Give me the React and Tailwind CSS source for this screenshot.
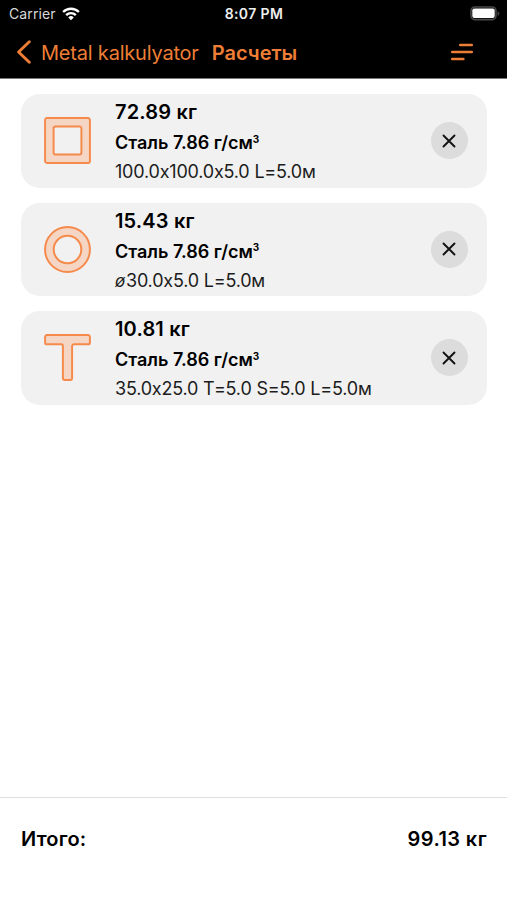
import React, { useState } from 'react';

const SquareTube = () => (
  <svg width="47" height="47" viewBox="0 0 48 48" fill="none" stroke="#f58a4b" strokeWidth="2">
    <path fill="#f5d5c3" fillRule="evenodd" strokeLinejoin="round" d="M3 1.1h42a1.9 1.9 0 0 1 1.9 1.9v42a1.9 1.9 0 0 1-1.9 1.9H3A1.9 1.9 0 0 1 1.1 45V3A1.9 1.9 0 0 1 3 1.1zM11.7 9.8a1.9 1.9 0 0 0-1.9 1.9v24.6a1.9 1.9 0 0 0 1.9 1.9h24.6a1.9 1.9 0 0 0 1.9-1.9V11.7a1.9 1.9 0 0 0-1.9-1.9z" />
  </svg>
);

const RoundTube = () => (
  <svg width="47" height="47" viewBox="0 0 48 48" fill="none" stroke="#f58a4b">
    <circle cx="24" cy="24" r="18.5" stroke="#f5d5c3" strokeWidth="8.6" />
    <circle cx="24" cy="24" r="22.9" strokeWidth="2" />
    <circle cx="24" cy="24" r="14.1" strokeWidth="2" />
  </svg>
);

const TeeBar = () => (
  <svg width="47" height="47" viewBox="0 0 48 48" fill="#f5d5c3" stroke="#f58a4b" strokeWidth="2" strokeLinejoin="round">
    <path d="M3 1.1h42a1.9 1.9 0 0 1 1.9 1.9v5.6a1.9 1.9 0 0 1-1.9 1.9H30.6a1.9 1.9 0 0 0-1.9 1.9V45a1.9 1.9 0 0 1-1.9 1.9h-5.6a1.9 1.9 0 0 1-1.9-1.9V12.4a1.9 1.9 0 0 0-1.9-1.9H3a1.9 1.9 0 0 1-1.9-1.9V3A1.9 1.9 0 0 1 3 1.1z" />
  </svg>
);

const initialItems = [
  { id: 1, icon: SquareTube, weight: 72.89, size: '100.0x100.0x5.0 L=5.0м' },
  { id: 2, icon: RoundTube, weight: 15.43, round: true, size: '30.0x5.0 L=5.0м' },
  { id: 3, icon: TeeBar, weight: 10.81, size: '35.0x25.0 T=5.0 S=5.0 L=5.0м' },
];

const StatusBar = () => (
  <div className="grid grid-cols-3 items-center h-[27px] pl-[9px] pr-[7px] text-white">
    <div className="flex items-center gap-[6px]">
      <span className="text-[14px] leading-4 tracking-[0.1px] text-[#d8d8d8]">Carrier</span>
      <svg width="18" height="14" viewBox="0 0 19 14" fill="none" stroke="#fff" strokeWidth="2.5">
        <path d="M1.2 4.9a11.7 11.7 0 0 1 16.6 0" />
        <path d="M4.4 8.2a7.2 7.2 0 0 1 10.2 0" />
        <path d="M9.5 13.6 6.6 10.6a4.1 4.1 0 0 1 5.8 0z" fill="#fff" stroke="none" />
      </svg>
    </div>
    <span className="-ml-px text-center text-[14px] leading-4 font-semibold tracking-[0.4px] text-[#eee]">8:07 PM</span>
    <svg className="justify-self-end" width="30" height="15" viewBox="0 0 30 15">
      <rect x="1" y="1" width="25" height="12.6" rx="3.8" fill="none" stroke="#4a4a4a" strokeWidth="1.6" />
      <rect x="2.3" y="2.5" width="22.4" height="9.6" rx="2" fill="#fff" />
      <path d="M27.6 5.2c2.3.8 2.3 3.8 0 4.6z" fill="#4a4a4a" />
    </svg>
  </div>
);

const Header = () => (
  <header className="h-[79px] shrink-0 bg-black border-b border-[#777]">
    <StatusBar />
    <div className="flex items-center h-[51px] pl-4 pr-[33px] text-[#ee7e35]">
      <button className="flex items-center">
        <svg className="mb-px" width="16" height="24" viewBox="0 0 16 24" fill="none" stroke="currentColor" strokeWidth="2.9" strokeLinecap="round" strokeLinejoin="round">
          <path d="M13.3 1.8 2.6 12l10.7 10.2" />
        </svg>
        <span className="ml-[9px] text-[20px] leading-6 tracking-[-0.2px]">Metal kalkulyator</span>
      </button>
      <h1 className="ml-[13px] text-[20px] leading-6 font-semibold">Расчеты</h1>
      <svg className="ml-auto mb-px" width="24" height="20" viewBox="0 0 24 20" stroke="currentColor" strokeWidth="2.7" strokeLinecap="round">
        <path d="M10.3 3h11.4M2.3 10h19.4M2.3 17h11" />
      </svg>
    </div>
  </header>
);

const ItemCard = ({ item, onRemove }) => {
  const Icon = item.icon;
  return (
    <div className="flex items-center h-[93.5px] pl-[23px] pr-[19px] rounded-[19px] bg-[#f1f1f1]">
      <Icon />
      <div className="ml-6 pt-0.5 flex flex-col">
        <span className="text-[20px] leading-[30px] font-semibold tracking-[0.15px]">{item.weight.toFixed(2)} кг</span>
        <span className="mt-px text-[18px] leading-[30px] font-semibold tracking-[-0.02px]">
          Сталь 7.86 г/см<sup className="text-[10px] leading-none font-bold -top-[6.5px] align-baseline">3</sup>
        </span>
        <span className="text-[18px] leading-[28px] tracking-[-0.2px] text-[#1c1c1c]">
          {item.round && <span className="inline-block w-[11px] text-[17px] leading-none italic">ø</span>}
          {item.size}
        </span>
      </div>
      <button
        className="ml-auto flex items-center justify-center size-[37px] rounded-full bg-[#dcdcdc]"
        onClick={() => onRemove(item.id)}
      >
        <svg className="mr-px" width="14" height="14" viewBox="0 0 14 14" stroke="#111" strokeWidth="1.9" strokeLinecap="round">
          <path d="M1.5 1.5l11 11M12.5 1.5l-11 11" />
        </svg>
      </button>
    </div>
  );
};

const App = () => {
  const [items, setItems] = useState(initialItems);

  const handleRemove = (id) => {
    setItems(items.filter((item) => item.id !== id));
  };

  const total = items.reduce((sum, item) => sum + item.weight, 0);

  return (
    <div className="flex flex-col h-screen bg-white text-black font-['Inter',sans-serif]">
      <Header />
      <main className="flex-1 flex flex-col gap-[15px] pt-[15px] pl-[21px] pr-5">
        {items.map((item) => (
          <ItemCard key={item.id} item={item} onRemove={handleRemove} />
        ))}
      </main>
      <footer className="flex justify-between h-[103px] shrink-0 border-t border-[#dedede] pt-[26px] pl-[21px] pr-5 text-[20px] leading-[30px] font-semibold">
        <span className="tracking-[0.2px]">Итого:</span>
        <span className="tracking-[0.4px]">{total.toFixed(2)} кг</span>
      </footer>
    </div>
  );
};

export default App;
